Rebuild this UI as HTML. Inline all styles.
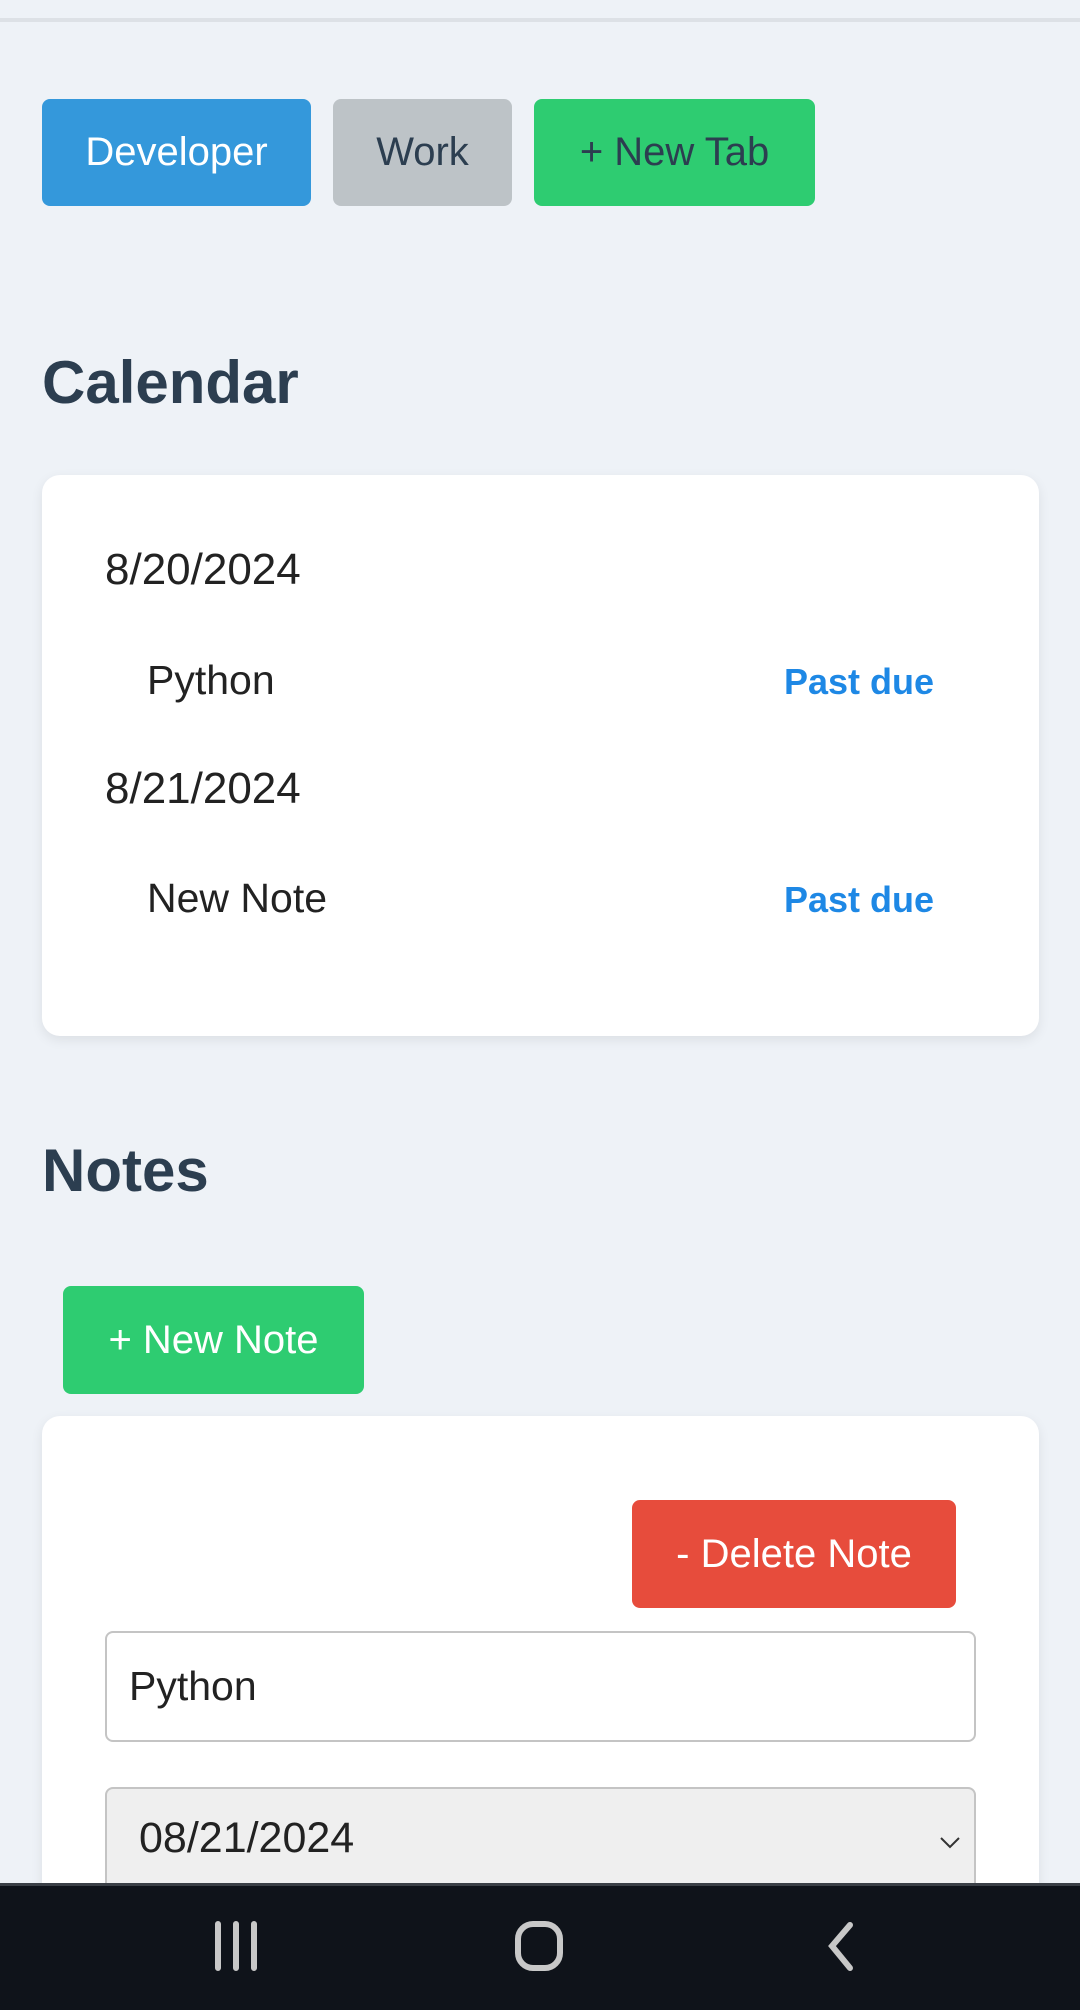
<!DOCTYPE html>
<html><head><meta charset="utf-8"><style>
*{margin:0;padding:0;box-sizing:border-box}
html{width:1080px;height:2010px;overflow:hidden}
body{width:1080px;height:2010px;background:#eef2f7;font-family:"Liberation Sans",sans-serif;position:relative;overflow:hidden;color:#2c3e50}
.a{position:absolute}
.topline{left:0;top:18px;width:1080px;height:4px;background:#dde1e6}
.btn{position:absolute;border-radius:8px;display:flex;align-items:center;justify-content:center;font-size:40px}
h2{position:absolute;font-size:60px;font-weight:bold;color:#2c3e50}
.card{position:absolute;left:42px;width:997px;background:#fff;border-radius:18px;box-shadow:0 4px 12px rgba(0,0,0,.08)}
.t{position:absolute;font-size:41px;color:#222;line-height:1}
.d{font-size:44px}
.pd{position:absolute;font-size:36px;font-weight:bold;color:#1e88e5;line-height:1}
</style></head><body>
<div class="a topline"></div>
<div class="btn" style="left:42px;top:99px;width:269px;height:107px;background:#3498db;color:#fff">Developer</div>
<div class="btn" style="left:333px;top:99px;width:179px;height:107px;background:#bdc3c7;color:#2c3e50">Work</div>
<div class="btn" style="left:534px;top:99px;width:281px;height:107px;background:#2ecc71;color:#2c3e50">+ New Tab</div>
<h2 style="left:42px;top:348px">Calendar</h2>
<div class="card" style="top:475px;height:561px"></div>
<div class="t d" style="left:105px;top:548px">8/20/2024</div>
<div class="t" style="left:147px;top:660px">Python</div>
<div class="pd" style="right:146px;top:664px">Past due</div>
<div class="t d" style="left:105px;top:767px">8/21/2024</div>
<div class="t" style="left:147px;top:878px">New Note</div>
<div class="pd" style="right:146px;top:882px">Past due</div>
<h2 style="left:42px;top:1136px">Notes</h2>
<div class="btn" style="left:63px;top:1286px;width:301px;height:108px;background:#2ecc71;color:#fff">+ New Note</div>
<div class="card" style="top:1416px;height:594px;border-radius:18px 18px 0 0"></div>
<div class="btn" style="left:632px;top:1500px;width:324px;height:108px;background:#e74c3c;color:#fff">- Delete Note</div>
<div class="a" style="left:105px;top:1631px;width:871px;height:111px;border:2px solid #c4c4c4;border-radius:8px;background:#fff;font-size:41px;color:#222;padding:30px 0 0 22px">Python</div>
<div class="a" style="left:105px;top:1787px;width:871px;height:120px;border:2px solid #c4c4c4;border-radius:8px;background:#efefef;font-size:43px;color:#222;padding:25px 0 0 32px">08/21/2024
<svg class="a" style="right:12px;top:45px" width="24" height="16" viewBox="0 0 24 16"><path d="M3 4l9 9 9-9" fill="none" stroke="#333" stroke-width="2"/></svg></div>
<div class="a" style="left:0;top:1883px;width:1080px;height:127px;background:#0f131a;border-top:3px solid #3a3f46"></div>
<svg class="a" style="left:0;top:1883px" width="1080" height="127" viewBox="0 0 1080 127">
<g stroke="#c8c8c8" stroke-width="6" stroke-linecap="round" fill="none">
<path d="M218 41v44M236 41v44M254 41v44"/>
<rect x="518" y="41" width="42" height="44" rx="15"/>
<path d="M850 42l-18 21 18 22"/>
</g></svg>
</body></html>
